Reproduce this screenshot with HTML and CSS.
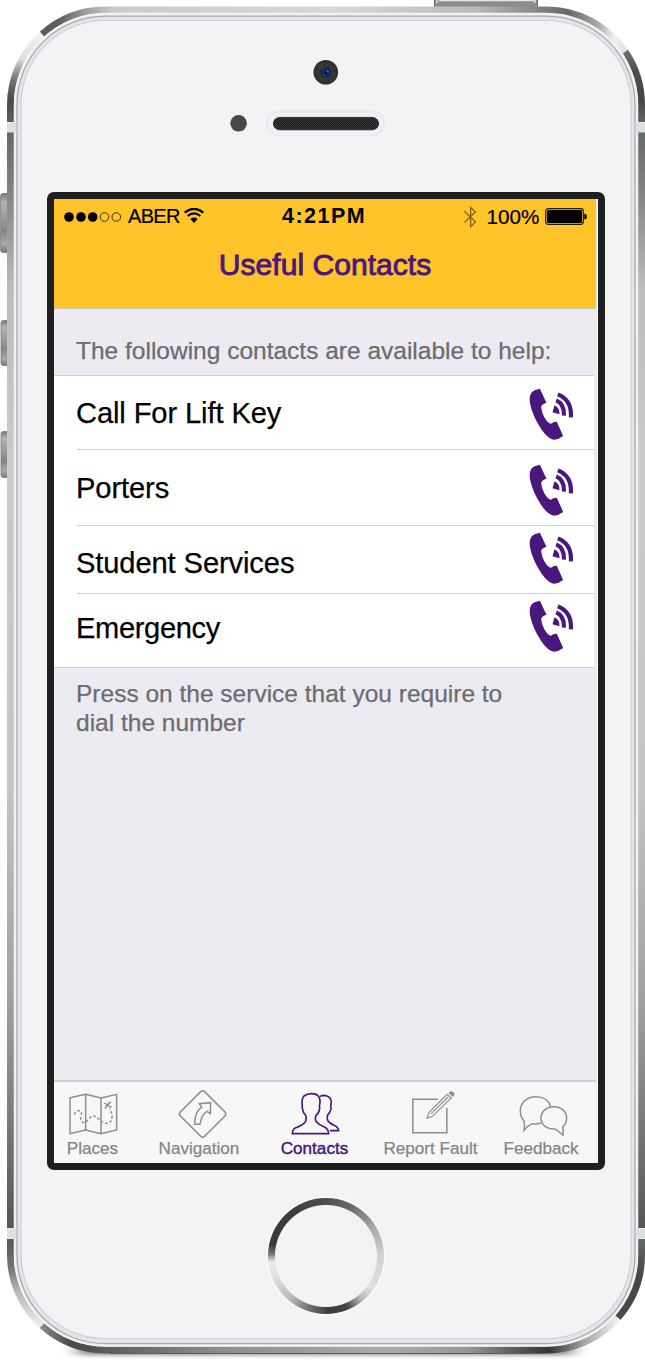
FILE: index.html
```html
<!DOCTYPE html>
<html lang="en">
<head>
<meta charset="utf-8">
<title>Useful Contacts</title>
<link rel="stylesheet" href="styles.css">
</head>
<body>
<svg class="defs" aria-hidden="true">
  <symbol id="call" viewBox="0 0 134 156">
    <path d="M32 2 52 44Q38 48 36 56Q37 72 45 87Q56 106 64 107Q69 107 72 103L83 101 102 144Q88 155 74 155Q56 152 38 126Q10 84 3 48Q-1 26 6 15Q14 5 32 2Z"/>
    <path d="M76 52Q92 60 91 79L70 73Z"/>
    <path d="M81 37Q106 47 104 83M86 19Q129 36 125 88" fill="none" stroke="currentColor" stroke-width="12.500"/>
  </symbol>
</svg>
<div class="phone">
  <svg class="shell" viewBox="0 0 645 1364" aria-hidden="true">
    <defs>
      <linearGradient id="gTop" gradientUnits="userSpaceOnUse" x1="42" y1="0" x2="626" y2="0">
        <stop offset="0" stop-color="#5b5d5c"/><stop offset=".03" stop-color="#5c5e5d"/><stop offset=".07" stop-color="#979998"/><stop offset=".12" stop-color="#c9cbc9"/><stop offset=".5" stop-color="#d7d9d7"/><stop offset=".74" stop-color="#b9bbb9"/><stop offset=".84" stop-color="#8b8d8b"/><stop offset=".9" stop-color="#666867"/><stop offset=".95" stop-color="#a5a6a5"/><stop offset=".98" stop-color="#f0f1f0"/><stop offset="1" stop-color="#dfe0df"/>
      </linearGradient>
      <linearGradient id="gTL" gradientUnits="userSpaceOnUse" x1="0" y1="34" x2="0" y2="122">
        <stop offset="0" stop-color="#f1f2f1"/><stop offset=".28" stop-color="#dcdedc"/><stop offset=".5" stop-color="#777978"/><stop offset=".75" stop-color="#474948"/><stop offset="1" stop-color="#5d5f5e"/>
      </linearGradient>
      <linearGradient id="gTR" gradientUnits="userSpaceOnUse" x1="0" y1="50" x2="0" y2="122">
        <stop offset="0" stop-color="#727472"/><stop offset=".3" stop-color="#4c4e4d"/><stop offset=".7" stop-color="#454746"/><stop offset="1" stop-color="#626463"/>
      </linearGradient>
      <linearGradient id="gSide" gradientUnits="userSpaceOnUse" x1="0" y1="132" x2="0" y2="1228">
        <stop offset="0" stop-color="#666867"/><stop offset=".06" stop-color="#858786"/><stop offset=".14" stop-color="#babcba"/><stop offset=".3" stop-color="#c9cbc9"/><stop offset=".6" stop-color="#c3c5c3"/><stop offset=".8" stop-color="#9d9f9d"/><stop offset=".94" stop-color="#6b6d6b"/><stop offset="1" stop-color="#555756"/>
      </linearGradient>
      <linearGradient id="gBL" gradientUnits="userSpaceOnUse" x1="0" y1="1238" x2="0" y2="1326">
        <stop offset="0" stop-color="#555756"/><stop offset=".35" stop-color="#757776"/><stop offset=".6" stop-color="#b5b7b5"/><stop offset="1" stop-color="#eceeec"/>
      </linearGradient>
      <linearGradient id="gBR" gradientUnits="userSpaceOnUse" x1="0" y1="1238" x2="0" y2="1318">
        <stop offset="0" stop-color="#666867"/><stop offset=".5" stop-color="#454746"/><stop offset="1" stop-color="#4b4d4c"/>
      </linearGradient>
      <linearGradient id="gBot" gradientUnits="userSpaceOnUse" x1="42" y1="0" x2="618" y2="0">
        <stop offset="0" stop-color="#888a88"/><stop offset=".05" stop-color="#484a49"/><stop offset=".15" stop-color="#666867"/><stop offset=".3" stop-color="#8b8d8b"/><stop offset=".6" stop-color="#aaacaa"/><stop offset=".74" stop-color="#969896"/><stop offset=".83" stop-color="#555756"/><stop offset=".88" stop-color="#343635"/><stop offset=".94" stop-color="#a0a2a0"/><stop offset="1" stop-color="#f0f1f0"/>
      </linearGradient>
      <linearGradient id="gKey" x1="0" y1="0" x2="0" y2="1">
        <stop offset="0" stop-color="#777978"/><stop offset=".15" stop-color="#b2b4b2"/><stop offset=".65" stop-color="#858786"/><stop offset=".85" stop-color="#a8aaa8"/><stop offset="1" stop-color="#777978"/>
      </linearGradient>
      <radialGradient id="gLens">
        <stop offset="0" stop-color="#101012"/><stop offset=".35" stop-color="#28282a"/><stop offset=".6" stop-color="#39393b"/><stop offset="1" stop-color="#2b2b2d"/>
      </radialGradient>
      <pattern id="mesh" width="2" height="2" patternUnits="userSpaceOnUse">
        <path d="M0 0H2V2H0Z" fill="#1a1a1a"/><path d="M0 0H1V1H0ZM1 1H2V2H1Z" fill="#393939"/>
      </pattern>
      <filter id="soft" x="-10%" y="-200%" width="120%" height="500%"><feGaussianBlur stdDeviation="9 2"/></filter>
    </defs>
    <rect x="78" y="1347" width="494" height="8" fill="#444" opacity=".65" filter="url(#soft)"/>
    <g fill="url(#gKey)" stroke="#777978" stroke-width=".8">
      <rect x=".6" y="193.5" width="9" height="59" rx="2.5"/>
      <rect x="1" y="320.5" width="9" height="45" rx="2.5"/>
      <rect x="1" y="431.500" width="9" height="46" rx="2.5"/>
    </g>
    <rect x="434.500" y="-4" width="103" height="14" rx="3" fill="#8b8d8b" stroke="#666867"/>
    <path d="M437 0V3M535 0V3M439 .5H534" stroke="#e6e7e6" stroke-width="1.500"/>
    <rect x="10" y="10" width="632" height="1341" rx="95" fill="#eef0ee"/>
    <g fill="none" stroke-width="7">
      <path d="M42.100 34.300A95 95 0 0 1 105.500 10H546.500A95 95 0 0 1 625.200 51.800" stroke="url(#gTop)"/>
      <path d="M10.500 122V105A95 95 0 0 1 42.100 34.300" stroke="url(#gTL)"/>
      <path d="M625.200 51.800A95 95 0 0 1 641.500 105V122" stroke="url(#gTR)"/>
      <path d="M10.500 1239V1255A95 95 0 0 0 42 1325.500" stroke="url(#gBL)"/>
      <path d="M641.500 1239V1255A95 95 0 0 1 617.800 1317.800" stroke="url(#gBR)"/>
      <path d="M42 1325.500A95 95 0 0 0 105.500 1350H546.500A95 95 0 0 0 617.800 1317.800" stroke="url(#gBot)"/>
    </g>
    <path d="M7 132H14V1228H7ZM638 132H645V1228H638Z" fill="url(#gSide)"/>
    <path d="M110 1353.500H545" stroke="#5a5c5b" stroke-width="1"/>
    <rect x="14.500" y="13.500" width="623" height="1332.500" rx="91" fill="none" stroke="#f2f4f2" stroke-width="1.500"/>
    <rect x="17" y="16.200" width="618" height="1327.500" rx="88.500" fill="#e4e5ea" stroke="#a9abad" stroke-width="1.300"/>
    <rect x="21" y="20.500" width="610" height="1318" rx="84" fill="#f2f3f5" stroke="#d0d1d7" stroke-width="1.200"/>
    <path d="M7 122.500H16.500V132.500H7ZM635.500 122.500H645V132.500H635.500ZM7 1228.500H16.500V1238.500H7ZM635.500 1228.500H645V1238.500H635.500Z" fill="#dcdfe3"/>
    <circle cx="325.800" cy="72.300" r="12.300" fill="url(#gLens)"/>
    <circle cx="326" cy="73" r="4" fill="#0a2c7c"/>
    <circle cx="325.500" cy="73.500" r="1.700" fill="#0b1430"/>
    <path d="M327 71.500h1.500M324 75h1" stroke="#3e7ee8" stroke-width="1.500"/>
    <circle cx="238.600" cy="123.300" r="8.300" fill="#474747"/>
    <rect x="266" y="110" width="119" height="26" rx="13" fill="#e9eaef"/>
    <rect x="268" y="112.500" width="115" height="22.500" rx="11" fill="#f0f1f6"/>
    <rect x="273.400" y="117.400" width="105.200" height="12.400" rx="6.200" fill="url(#mesh)" stroke="#1b1b1b" stroke-width=".8"/>
  </svg>

  <main class="screen">
    <header class="top">
      <div class="status">
        <svg class="dots" viewBox="0 0 58 10"><g><circle cx="5" cy="5" r="4.800"/><circle cx="17" cy="5" r="4.800"/><circle cx="28.700" cy="5" r="4.800"/></g><g fill="none" stroke="#2b230d" stroke-width=".9"><circle cx="40.500" cy="5" r="4.300"/><circle cx="52.300" cy="5" r="4.300"/></g></svg>
        <span class="carrier">ABER</span>
        <svg class="wifi" viewBox="0 0 60 46"><path d="M2 14Q30-9 58 14M11 24Q30 8 49 24" fill="none" stroke="#000" stroke-width="6.500"/><path d="M19 33Q30 24 41 33L30 45Z"/></svg>
        <span class="time">4:21PM</span>
        <svg class="bt" viewBox="0 0 36 64"><path d="M1 15 33 46 19 60V4L33 17 1 48" fill="none" stroke="#86681b" stroke-width="4"/></svg>
        <span class="pct">100%</span>
        <svg class="battery" viewBox="0 0 42 17"><rect x=".7" y=".7" width="37.600" height="15.600" rx="2.500" fill="none" stroke="#1d1705" stroke-width="1.200"/><rect x="2" y="2" width="35" height="13" rx="1.500"/><path d="M39.300 5.500Q42 6 42 8.500T39.300 11.500Z"/></svg>
      </div>
      <h1>Useful Contacts</h1>
    </header>
    <p class="intro">The following contacts are available to help:</p>
    <ul class="list">
      <li class="row row-lift"><span>Call For Lift Key</span><svg class="call"><use href="#call"/></svg></li>
      <li class="row row-porters"><span>Porters</span><svg class="call"><use href="#call"/></svg></li>
      <li class="row row-student"><span>Student Services</span><svg class="call"><use href="#call"/></svg></li>
      <li class="row row-emergency"><span>Emergency</span><svg class="call"><use href="#call"/></svg></li>
    </ul>
    <p class="note">Press on the service that you require to<br>dial the number</p>
    <nav class="tabs">
      <a class="tab"><svg viewBox="69 48 180 162"><path d="M90 83 137 73 183 84 230 73V180L183 191 137 180 90 191ZM137 73V180M183 84V191"/><path d="M103 134Q107 122 115 122Q129 123 122 139Q121 155 132 158Q143 154 150 143Q163 132 175 146Q188 160 201 160Q217 157 216 139Q215 124 208 116" stroke-dasharray="8 6"/><path d="M193 99Q202 105 215 112M212 96Q202 102 195 116"/></svg><span>Places</span></a>
      <a class="tab"><svg viewBox="387 48 180 162"><path d="M482 65Q488 60 494 65L555 126Q560 132 555 138L494 199Q488 205 482 199L421 138Q415 132 421 126Z"/><path d="M464 163Q464 123 485 112L478 101 512 98 511 131 501 124Q485 132 480 163Z" stroke-width="4.500"/></svg><span>Navigation</span></a>
      <a class="tab active"><svg viewBox="735 48 180 162"><path d="M757 191Q757 178 766 174Q790 165 797 154Q801 145 797 136Q789 130 788 118Q785 116 787 109Q784 86 792 78Q801 71 814 71Q831 71 836 80Q843 89 838 109Q841 114 838 119Q837 130 828 136Q824 149 828 154Q835 164 855 172Q865 177 866 191Z" stroke-width="5"/><path d="M839 80Q845 76 852 76Q866 77 872 87Q876 96 872 109Q875 115 872 120Q869 130 863 135Q860 146 863 151Q867 159 882 166Q894 171 896 182H870" stroke-width="5"/></svg><span>Contacts</span></a>
      <a class="tab"><svg viewBox="242.500 48 180 162"><path d="M353 88H278V188H380V113"/><path d="M321 145 326 128 381 73 393 84 337 139ZM333 131 384 81" stroke-width="3.500"/><path d="M386 68Q391 61 398 66Q406 71 401 77L398 81 385 69Z" fill="#8e8e8e" stroke="none"/></svg><span>Report Fault</span></a>
      <a class="tab"><svg viewBox="573 48 180 162"><path d="M663 159Q650 163 637 161Q625 166 612 181Q615 166 612 153Q601 140 601 123C601 98 620 80 647 80C670 80 687 91 692 110"/><path d="M729 195Q731 182 728 171C737 163 740 154 740 144C740 124 723 110 702 110C680 110 663 124 663 144C663 165 681 179 706 177Q715 184 729 195Z"/></svg><span>Feedback</span></a>
    </nav>
  </main>
  <div class="home"></div>
</div>
</body>
</html>
```
FILE: styles.css
```css
* { box-sizing: border-box; }

body {
  margin: 0;
  background: #fff;
  font-family: "Liberation Sans", Arial, sans-serif;
}

.defs { position: absolute; width: 0; height: 0; }

.phone {
  position: relative;
  width: 645px;
  height: 1364px;
  padding: 192px 0 0 47px;
  overflow: hidden;
}

.shell {
  position: absolute;
  inset: 0;
  width: 645px;
  height: 1364px;
}

.screen {
  position: relative;
  display: flex;
  flex-direction: column;
  width: 557.5px;
  height: 978px;
  border: solid #1f1f1f;
  border-width: 7px 7.5px 7px 7px;
  border-radius: 7px;
  background: #ebebf1;
  box-shadow: inset -1px 0 #fff;
}

.top {
  width: 542px;
  height: 110px;
  background: #ffc429;
  border-bottom: 1px solid #c9c3b3;
}

.status {
  display: flex;
  align-items: center;
  height: 35px;
  padding-left: 10px;
  color: #000;
  font-size: 20px;
  line-height: 35px;
}

.dots { width: 58px; height: 10px; }
.carrier { width: 52px; margin-left: 6px; letter-spacing: -0.7px; -webkit-text-stroke: 0.2px #000; }
.wifi { width: 20px; height: 15.3px; margin: 0 0 2px 4px; }
.time { width: 92px; margin-left: 78px; font-size: 21.5px; font-weight: bold; letter-spacing: 1.5px; }
.bt { width: 12.5px; height: 22px; margin-left: 89.5px; }
.pct { width: 54px; margin-left: 10.5px; font-size: 20.7px; -webkit-text-stroke: 0.2px #000; }
.battery { width: 42px; height: 17px; margin-left: 4px; flex: none; }

h1 {
  margin: 14px 0 0;
  color: #4a177d;
  font-size: 30.1px;
  font-weight: normal;
  line-height: 34px;
  text-align: center;
  -webkit-text-stroke: 0.9px #4a177d;
}

.intro,
.note {
  margin: 0;
  padding-left: 22px;
  color: #6c6c70;
  font-size: 24.5px;
  -webkit-text-stroke: 0.25px #6c6c70;
}

.intro { height: 67px; padding-top: 27px; line-height: 29px; }
.note { padding-top: 11px; line-height: 29px; }

.list {
  width: 540px;
  margin: 0;
  padding: 0;
  list-style: none;
  background: #fff;
  box-shadow: 0 -1px #d0d0d4;
  border-bottom: 1px solid #d0d0d4;
}

.row {
  display: flex;
  justify-content: space-between;
  margin-left: 23px;
  padding-right: 20px;
  border-bottom: 1px solid #cfcfd2;
  color: #000;
  font-size: 29.1px;
  letter-spacing: -0.1px;
  line-height: 34px;
  -webkit-text-stroke: 0.25px #000;
}

.row span { margin-left: -1px; }
.row-lift { height: 74px; padding-top: 12px; }
.row-lift span { padding-top: 8px; }
.row-porters { height: 76px; padding-top: 14px; }
.row-porters span { padding-top: 7px; }
.row-student { height: 68px; padding-top: 6px; }
.row-student span { padding-top: 13.5px; }
.row-emergency { height: 73px; padding-top: 6px; border-bottom: 0; letter-spacing: -0.35px; }
.row-emergency span { padding-top: 11px; }

.call {
  width: 45px;
  height: 52px;
  color: #4a177d;
  fill: #4a177d;
}

.tabs {
  display: grid;
  grid-template-columns: 77px 136px 95px 137px 84px;
  width: 542px;
  height: 83px;
  margin-top: auto;
  background: #f7f7f7;
  border-top: 2px solid #d0d0d4;
}

.tab {
  display: flex;
  flex-direction: column;
  align-items: center;
  padding-top: 4px;
  color: #858585;
  font-size: 17.1px;
  line-height: 18px;
  white-space: nowrap;
  -webkit-text-stroke: 0.25px currentColor;
}

.tab svg {
  width: 60px;
  height: 54px;
  fill: none;
  stroke: #8e8e8e;
  stroke-width: 4.5;
}

.tab.active { color: #4a177d; -webkit-text-stroke-width: 0.45px; }
.tab.active svg { stroke: #4a177d; }

.home {
  position: relative;
  width: 116px;
  height: 116px;
  margin: 28px 0 0 221.3px;
  border-radius: 50%;
  background:
    radial-gradient(circle, #f2f3f5 50.5px, transparent 51.5px),
    conic-gradient(#4d4d4d, #666 25deg, #aaa 60deg, #d3d3d3 90deg, #e0e0e0 125deg, #bbb 140deg, #444 158deg, #3c3c3c 178deg, #777 200deg, #bbb 220deg, #ddd 245deg, #e8e8e8 264deg, #777 272deg, #3a3a3a 282deg, #3b3b3b 320deg, #4d4d4d);
  box-shadow: 0 0 2px 1px #fff;
}
```
